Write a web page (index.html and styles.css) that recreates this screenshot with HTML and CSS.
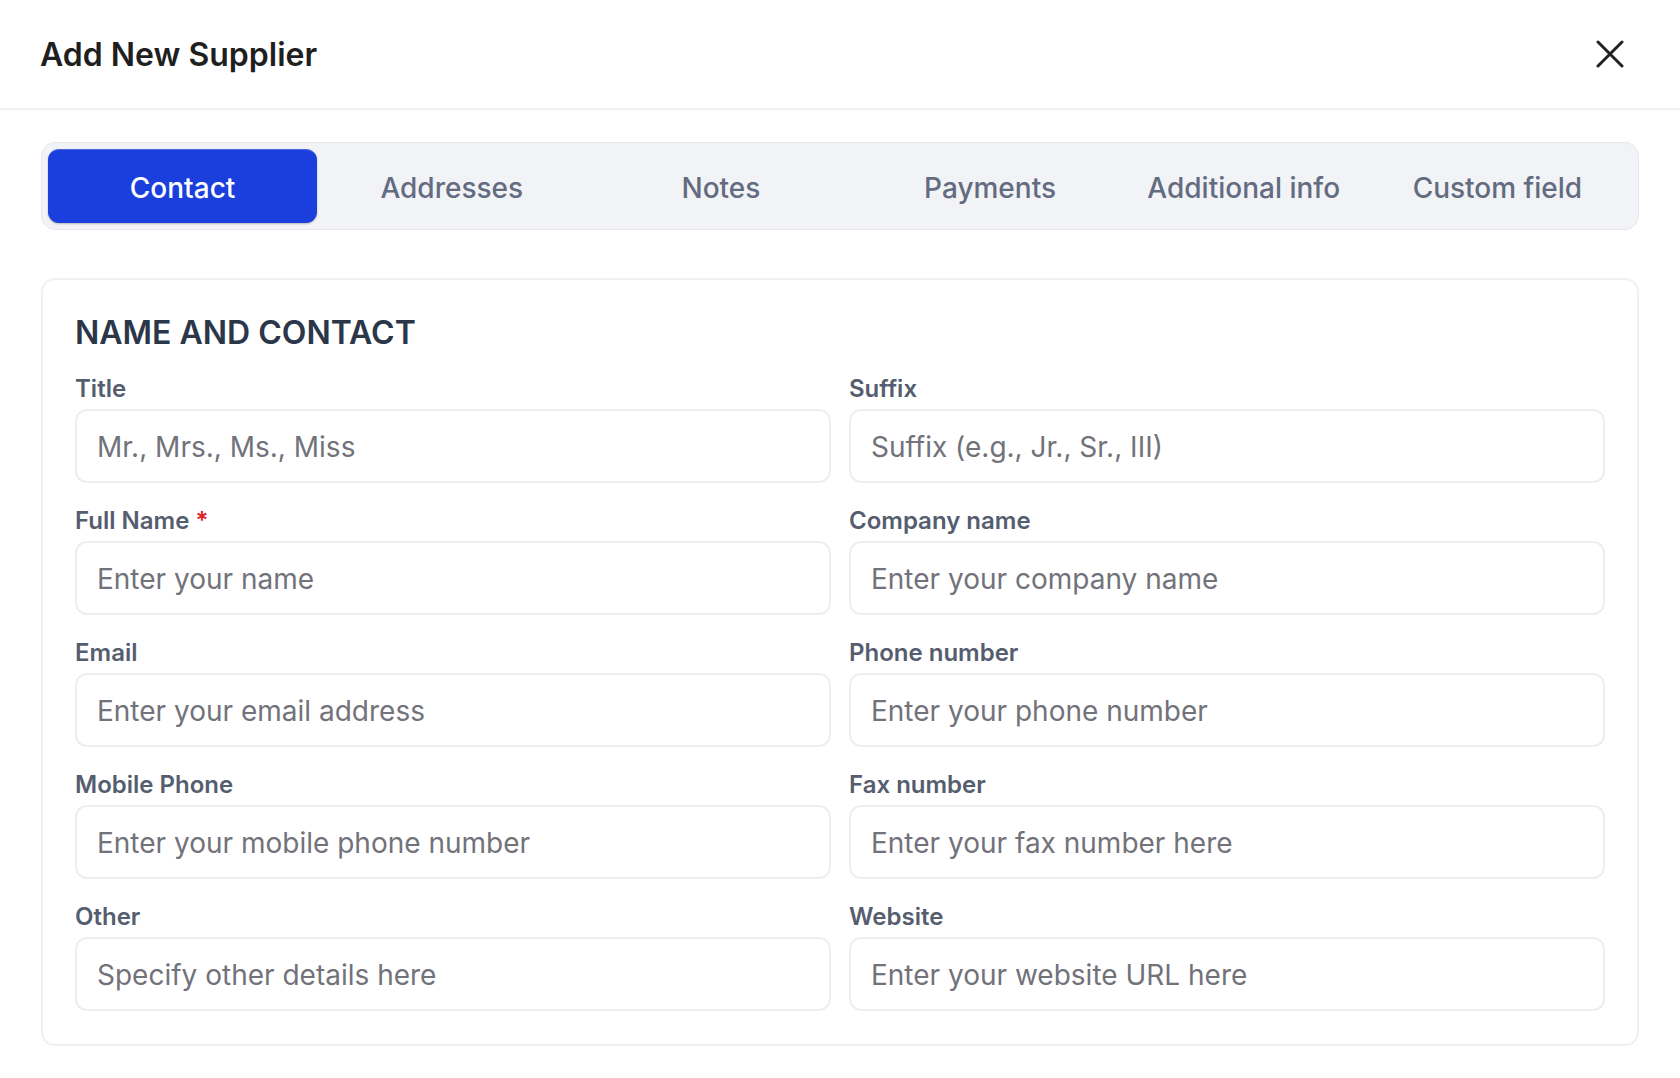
FILE: index.html
```html
<!DOCTYPE html>
<html lang="en">
<head>
  <meta charset="UTF-8">
  <meta name="viewport" content="width=device-width, initial-scale=1.0">
  <title>Add New Supplier</title>
  <link rel="stylesheet" href="styles.css">
</head>
<body>
  <!-- header -->
  <header class="modal-header">
    <h1>Add New Supplier</h1>
    <button class="close-btn" aria-label="Close">
      <svg viewBox="0 0 28 28" width="28" height="28"><path d="M2 2 L26 26 M26 2 L2 26" stroke="#222" stroke-width="3" stroke-linecap="round" fill="none"/></svg>
    </button>
  </header>

  <main class="modal-body">
    <!-- tabs -->
    <nav class="tabs">
      <button class="tab active">Contact</button>
      <button class="tab">Addresses</button>
      <button class="tab">Notes</button>
      <button class="tab">Payments</button>
      <button class="tab">Additional info</button>
      <button class="tab">Custom field</button>
    </nav>

    <!-- name and contact -->
    <section class="card">
      <h2>NAME AND CONTACT</h2>
      <div class="form-grid">
        <div class="field">
          <label>Title</label>
          <input type="text" placeholder="Mr., Mrs., Ms., Miss">
        </div>
        <div class="field">
          <label>Suffix</label>
          <input type="text" placeholder="Suffix (e.g., Jr., Sr., III)">
        </div>
        <div class="field">
          <label>Full Name <span class="req">*</span></label>
          <input type="text" placeholder="Enter your name">
        </div>
        <div class="field">
          <label>Company name</label>
          <input type="text" placeholder="Enter your company name">
        </div>
        <div class="field">
          <label>Email</label>
          <input type="text" placeholder="Enter your email address">
        </div>
        <div class="field">
          <label>Phone number</label>
          <input type="text" placeholder="Enter your phone number">
        </div>
        <div class="field">
          <label>Mobile Phone</label>
          <input type="text" placeholder="Enter your mobile phone number">
        </div>
        <div class="field">
          <label>Fax number</label>
          <input type="text" placeholder="Enter your fax number here">
        </div>
        <div class="field">
          <label>Other</label>
          <input type="text" placeholder="Specify other details here">
        </div>
        <div class="field">
          <label>Website</label>
          <input type="text" placeholder="Enter your website URL here">
        </div>
      </div>
    </section>
  </main>
</body>
</html>
```

FILE: styles.css
```css
/* base */
* { box-sizing: border-box; }
body { margin: 0; font-family: Inter, "Noto Sans", sans-serif; background: #fff; color: #1f1f1f; }

/* header */
.modal-header { height: 110px; display: flex; align-items: center; justify-content: space-between; padding: 0 56px 0 40px; border-bottom: 2px solid #f1f2f4; }
.modal-header h1 { margin: 0; font-size: 32px; font-weight: 600; color: #1f1f1f; }
.close-btn { background: none; border: none; padding: 0; cursor: pointer; display: flex; }

.modal-body { padding: 32px 41px 0; }

/* tabs */
.tabs { display: grid; grid-template-columns: repeat(4, 1fr) 0.885fr 1fr; padding: 6px; background: #f1f3f6; border: 1px solid #e6e8eb; border-radius: 14px; }
.tab { height: 74px; padding: 3px 0 0; border: none; background: none; font-family: inherit; font-size: 28px; font-weight: 500; color: #636b80; border-radius: 11px; cursor: pointer; }
.tab.active { background: #1a3fdc; color: #fff; border-top: 1px solid #4a68e6; box-shadow: 0 1px 2px rgba(0,0,0,0.25); }

/* card */
.card { margin-top: 48px; border: 2px solid #eef0f2; border-radius: 14px; padding: 32px 32px 33px; }
.card h2 { margin: 0 0 17px; font-size: 32px; line-height: 42px; font-weight: 600; color: #2b3648; }
.form-grid { display: grid; grid-template-columns: 1fr 1fr; column-gap: 18px; row-gap: 20px; }
.field label { display: block; font-size: 24px; line-height: 36px; font-weight: 600; color: #555d6f; margin-bottom: 2px; }
.req { color: #dc2626; }
.field input { display: block; width: 100%; height: 74px; padding: 2px 20px 0; border: 2px solid #eceef0; border-radius: 12px; font-family: inherit; font-size: 28px; color: #1f1f1f; outline: none; }
.field input::placeholder { color: #72727a; }
```
